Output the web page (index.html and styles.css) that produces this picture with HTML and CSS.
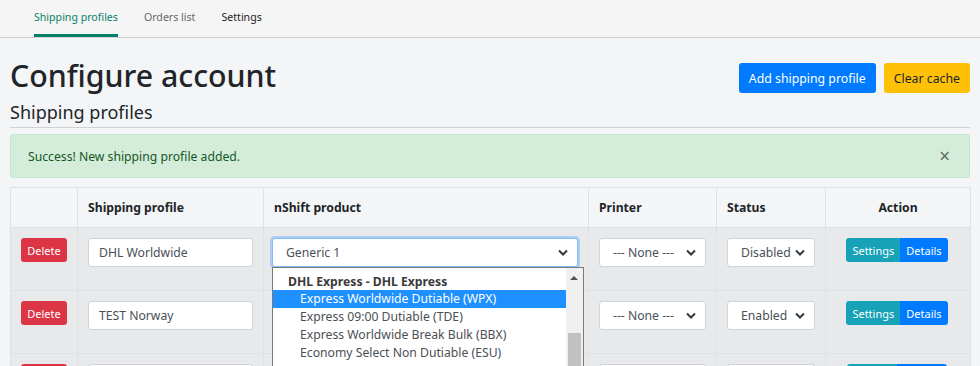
FILE: index.html
```html
<!DOCTYPE html>
<html lang="en">
<head>
    <meta charset="UTF-8">
    <meta name="viewport" content="width=device-width, initial-scale=1.0">
    <title>Configure account</title>
    <link rel="stylesheet" href="styles.css">
</head>
<body>
    <!-- Top tabs -->
    <nav class="tabs">
        <a class="tab active">Shipping profiles</a>
        <a class="tab muted">Orders list</a>
        <a class="tab">Settings</a>
    </nav>

    <div class="page">
        <div class="page-head">
            <h1>Configure account</h1>
            <div class="head-buttons">
                <button class="btn btn-primary">Add shipping profile</button>
                <button class="btn btn-warning">Clear cache</button>
            </div>
        </div>
        <h2 class="section-title">Shipping profiles</h2>

        <div class="alert">
            <span>Success! New shipping profile added.</span>
            <span class="close">&times;</span>
        </div>

        <table class="profiles">
            <thead>
                <tr>
                    <th class="col-del"></th>
                    <th class="col-name">Shipping profile</th>
                    <th class="col-product">nShift product</th>
                    <th class="col-printer">Printer</th>
                    <th class="col-status">Status</th>
                    <th class="col-action">Action</th>
                </tr>
            </thead>
            <tbody>
                <tr>
                    <td><button class="btn-sm btn-danger">Delete</button></td>
                    <td><div class="field">DHL Worldwide</div></td>
                    <td class="product-cell">
                        <div class="field select focused">Generic 1</div>
                        <!-- open dropdown list -->
                        <div class="dropdown">
                            <div class="dropdown-items">
                                <div class="group-label">DHL Express - DHL Express</div>
                                <div class="option selected">Express Worldwide Dutiable (WPX)</div>
                                <div class="option">Express 09:00 Dutiable (TDE)</div>
                                <div class="option">Express Worldwide Break Bulk (BBX)</div>
                                <div class="option">Economy Select Non Dutiable (ESU)</div>
                            </div>
                            <div class="scrollbar">
                                <span class="arrow-up"></span>
                                <span class="thumb"></span>
                            </div>
                        </div>
                    </td>
                    <td><div class="field select">--- None ---</div></td>
                    <td><div class="field select">Disabled</div></td>
                    <td class="action-cell">
                        <div class="btn-group">
                            <button class="btn-sm btn-info">Settings</button><button class="btn-sm btn-primary">Details</button>
                        </div>
                    </td>
                </tr>
                <tr>
                    <td><button class="btn-sm btn-danger">Delete</button></td>
                    <td><div class="field">TEST Norway</div></td>
                    <td class="product-cell"><div class="field select"></div></td>
                    <td><div class="field select">--- None ---</div></td>
                    <td><div class="field select">Enabled</div></td>
                    <td class="action-cell">
                        <div class="btn-group">
                            <button class="btn-sm btn-info">Settings</button><button class="btn-sm btn-primary">Details</button>
                        </div>
                    </td>
                </tr>
                <tr>
                    <td><button class="btn-sm btn-danger"></button></td>
                    <td><div class="field"></div></td>
                    <td class="product-cell"><div class="field select"></div></td>
                    <td><div class="field select"></div></td>
                    <td><div class="field select"></div></td>
                    <td class="action-cell">
                        <div class="btn-group">
                            <button class="btn-sm btn-info wide"></button><button class="btn-sm btn-primary wide"></button>
                        </div>
                    </td>
                </tr>
            </tbody>
        </table>
    </div>
</body>
</html>
```

FILE: styles.css
```css
* {
    margin: 0;
    padding: 0;
    box-sizing: border-box;
}

body {
    font-family: "Noto Sans", "Open Sans", Arial, sans-serif;
    font-size: 12.2px;
    color: #212529;
    background: #f4f5f7;
    height: 366px;
    overflow: hidden;
}

/* Tabs */
.tabs {
    display: flex;
    height: 38px;
    padding-left: 34px;
    gap: 26px;
    background: #f5f5f5;
    border-bottom: 1px solid #cfd1d4;
}

.tab {
    font-size: 10.6px;
    line-height: 34px;
    color: #222;
    border-bottom: 3px solid transparent;
}

.tab.active {
    color: #07806b;
    border-bottom-color: #07806b;
}

.tab.muted {
    color: #666;
}

/* Page */
.page {
    padding: 0 10px;
}

.page-head {
    display: flex;
    justify-content: space-between;
    align-items: flex-start;
    padding-top: 19px;
}

h1 {
    font-size: 30.3px;
    font-weight: 500;
    line-height: 38px;
}

.head-buttons {
    display: flex;
    gap: 8px;
    padding-top: 6px;
}

.btn {
    font-family: inherit;
    font-size: 12.3px;
    height: 30px;
    padding: 0 10px;
    border: none;
    border-radius: 3px;
    color: #fff;
}

.btn-primary {
    background: #007bff;
    color: #fff;
}

.btn-warning {
    background: #ffc107;
    color: #212529;
}

.section-title {
    font-size: 18px;
    font-weight: 400;
    line-height: 24px;
    margin-top: 5px;
    padding-bottom: 3px;
    border-bottom: 1px solid #cfd1d4;
}

.alert {
    display: flex;
    justify-content: space-between;
    align-items: center;
    height: 44px;
    margin-top: 6px;
    padding: 0 19px 0 17px;
    background: #d4edda;
    border: 1px solid #c3e6cb;
    border-radius: 3px;
    color: #155724;
}

.alert .close {
    font-size: 19px;
    color: #5c6b60;
}

/* Table */
.profiles {
    width: 960px;
    margin-top: 9px;
    border-collapse: collapse;
    table-layout: fixed;
}

.profiles th,
.profiles td {
    border: 1px solid #dfe1e4;
    text-align: left;
    vertical-align: top;
}

.profiles th {
    height: 40px;
    padding: 0 10px;
    vertical-align: middle;
    font-weight: 700;
    background: #f4f5f7;
}

.profiles td {
    height: 63px;
    padding: 10px;
    background: #e8e9eb;
}

.profiles td.product-cell {
    padding-left: 8px;
}

.col-del { width: 67px; }
.col-name { width: 186px; }
.col-product { width: 325px; }
.col-printer { width: 128px; }
.col-status { width: 109px; }
.col-action { width: 145px; text-align: center !important; }

.field {
    height: 29px;
    line-height: 27px;
    padding: 0 10px;
    background: #fff;
    border: 1px solid #ced4da;
    border-radius: 3px;
    color: #495057;
    white-space: nowrap;
    overflow: hidden;
}

.select {
    padding-left: 13px;
    background: #fff url("data:image/svg+xml,%3Csvg xmlns='http://www.w3.org/2000/svg' width='10' height='7' viewBox='0 0 10 7'%3E%3Cpath d='M1 1.5l4 4 4-4' fill='none' stroke='%23343a40' stroke-width='2'/%3E%3C/svg%3E") no-repeat right 9px center;
}

.focused {
    border-color: #80bdff;
    box-shadow: 0 0 0 2px rgba(0, 123, 255, 0.25);
}

.btn-sm {
    font-family: inherit;
    font-size: 11px;
    height: 24px;
    padding: 0 6px;
    border: none;
    border-radius: 3px;
    color: #fff;
    vertical-align: top;
}

.btn-danger {
    background: #dc3545;
    min-width: 46px;
}

.btn-info {
    background: #17a2b8;
}

.btn-sm.wide {
    width: 50px;
}

.action-cell {
    text-align: center !important;
}

.btn-group {
    display: inline-flex;
    margin-left: -2px;
}

.btn-group .btn-info {
    border-radius: 3px 0 0 3px;
}

.btn-group .btn-primary {
    border-radius: 0 3px 3px 0;
}

/* Open dropdown */
.product-cell {
    position: relative;
}

.dropdown {
    position: absolute;
    left: 8px;
    top: 39px;
    width: 312px;
    height: 110px;
    display: flex;
    background: #fff;
    border: 1px solid #7a7a7a;
    z-index: 5;
}

.dropdown-items {
    flex: 1;
    color: #4a4f55;
}

.group-label {
    height: 22px;
    line-height: 28px;
    padding-left: 15px;
    font-weight: 700;
    color: #3a3a3a;
}

.option {
    height: 18px;
    line-height: 18px;
    padding-left: 27px;
    white-space: nowrap;
}

.option.selected {
    background: #1e90ff;
    color: #fff;
}

.scrollbar {
    width: 17px;
    background: #f0f0f0;
    position: relative;
}

.arrow-up {
    position: absolute;
    left: 4px;
    top: 8px;
    border-left: 4px solid transparent;
    border-right: 4px solid transparent;
    border-bottom: 4px solid #505050;
}

.thumb {
    position: absolute;
    left: 2px;
    right: 2px;
    top: 65px;
    bottom: 0;
    background: #c1c1c1;
}
```
